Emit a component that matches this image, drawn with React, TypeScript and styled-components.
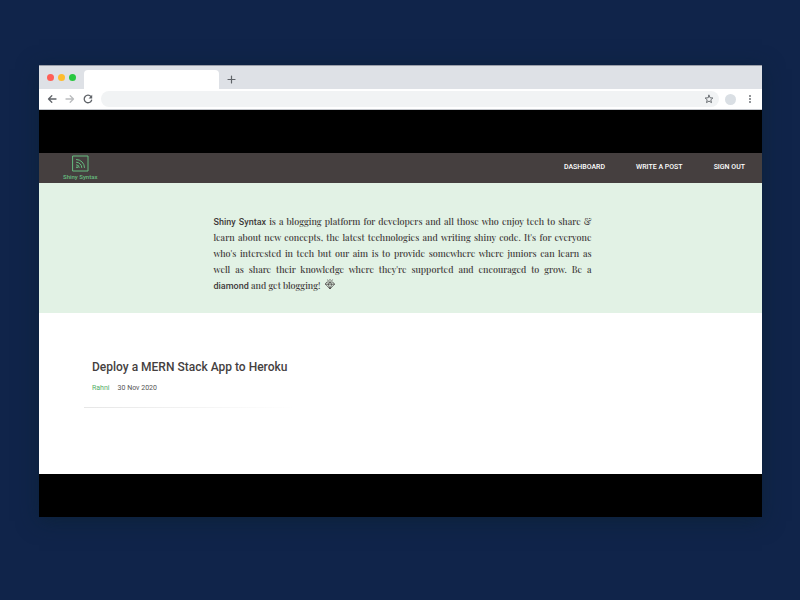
import React from 'react';
import styled, { createGlobalStyle } from 'styled-components';

const GlobalStyle = createGlobalStyle`
  *, *::before, *::after { box-sizing: border-box; }
  body {
    margin: 0;
    background: #10244a;
    font-family: Roboto, "Liberation Sans", sans-serif;
  }
`;

const Page = styled.div`
  min-height: 100vh;
  padding: 65px 38px 83px 39px;
`;

const BrowserWindow = styled.div`
  background: #000;
  box-shadow: 0 4px 20px rgba(10, 34, 46, 0.6);
`;

const TabStrip = styled.div`
  display: flex;
  align-items: flex-end;
  height: 24px;
  background: #dee1e6;
  border-top: 1px solid #9a9ea8;
`;

const TrafficLights = styled.div`
  display: flex;
  align-items: center;
  gap: 4px;
  width: 45px;
  height: 23px;
  padding-left: 8px;
`;

const Light = styled.span<{ $color: string }>`
  width: 7px;
  height: 7px;
  border-radius: 50%;
  background: ${({ $color }) => $color};
`;

const Tab = styled.div`
  width: 135px;
  height: 19px;
  background: #fff;
  border-radius: 4px 4px 0 0;
`;

const IconButton = styled.button<{ $color?: string }>`
  display: flex;
  padding: 0;
  border: 0;
  background: none;
  color: ${({ $color }) => $color ?? '#5f6368'};
`;

const NewTab = styled(IconButton)`
  margin: 0 0 5px 8px;
`;

const Toolbar = styled.div`
  display: flex;
  align-items: center;
  height: 21px;
  padding: 0 8px;
  background: #fff;
  border-bottom: 1px solid #c4c7cc;
`;

const NavButtons = styled.div`
  display: flex;
  gap: 8px;
  margin-right: 8px;
`;

const AddressBar = styled.div`
  display: flex;
  flex: 1;
  align-items: center;
  height: 16px;
  padding-right: 5px;
  background: #f1f3f4;
  border-radius: 8px;
`;

const AddressInput = styled.input`
  flex: 1;
  min-width: 0;
  height: 14px;
  padding: 0 8px;
  border: 0;
  outline: 0;
  background: transparent;
  font: 8px Roboto, sans-serif;
`;

const Avatar = styled.span`
  width: 11px;
  height: 11px;
  margin: 0 10px 0 6px;
  border-radius: 50%;
  background: #dadfe4;
`;

const Viewport = styled.div`
  padding: 43px 0;
`;

const SiteHeader = styled.header`
  display: flex;
  align-items: center;
  justify-content: space-between;
  height: 30px;
  padding: 0 17px 0 24px;
  background: #453f3f;
`;

const Logo = styled.a`
  display: flex;
  flex-direction: column;
  align-items: center;
  color: #66bd80;
  font: 500 6px/9px Roboto, sans-serif;
  text-decoration: none;
  white-space: nowrap;
`;

const SiteNav = styled.nav`
  display: flex;
  gap: 31px;
  padding-bottom: 2px;
`;

const NavLink = styled.a`
  color: #fff;
  font-size: 7px;
  font-weight: 500;
  line-height: 10px;
  text-decoration: none;
  text-transform: uppercase;
`;

const Hero = styled.section`
  padding: 30px 20px 20px 24px;
  background: #e2f2e5;
`;

const Intro = styled.p`
  max-width: 378px;
  margin: 0 auto;
  color: #3f3a3a;
  font: 500 9px/16px "Playfair Display", "Liberation Serif", serif;
  text-align: justify;

  strong {
    font: 500 9px/10px Roboto, sans-serif;
  }

  svg {
    margin-left: 2px;
    vertical-align: -1px;
  }
`;

const Phrase = styled.span`
  white-space: nowrap;
`;

const Posts = styled.main`
  min-height: 161px;
  padding: 45px;
  background: #fff;
`;

const Post = styled.article`
  width: 210px;
  padding: 0 0 14px 8px;
  border-bottom: 1px solid;
  border-image: linear-gradient(90deg, #e6e6e6, #fff) 1;
`;

const PostTitle = styled.h2`
  margin: 0 0 7px;
  color: #453f3f;
  font-size: 12px;
  font-weight: 500;
  line-height: 18px;
  white-space: nowrap;
`;

const PostMeta = styled.div`
  display: flex;
  gap: 8px;
  color: #555;
  font-size: 7px;
  line-height: 10px;
`;

const Author = styled.a`
  color: #54ad68;
  text-decoration: none;
`;

const Stroke = {
  fill: 'none',
  stroke: 'currentColor',
  strokeLinecap: 'round',
  strokeLinejoin: 'round',
} as const;

export default function App() {
  return (
    <>
      <GlobalStyle />
      <Page>
        <BrowserWindow>
          <TabStrip>
            <TrafficLights>
              <Light $color="#ff5f57" />
              <Light $color="#febc2e" />
              <Light $color="#28c840" />
            </TrafficLights>
            <Tab />
            <NewTab aria-label="New tab">
              <svg width="9" height="9" viewBox="0 0 9 9" {...Stroke} strokeWidth="1.2">
                <path d="M4.5 1v7M1 4.5h7" />
              </svg>
            </NewTab>
          </TabStrip>
          <Toolbar>
            <NavButtons>
              <IconButton aria-label="Back">
                <svg width="10" height="10" viewBox="0 0 10 10" {...Stroke} strokeWidth="1.3">
                  <path d="M9 5H1.5M4.8 1.8L1.5 5l3.3 3.2" />
                </svg>
              </IconButton>
              <IconButton aria-label="Forward" $color="#babcbe">
                <svg width="10" height="10" viewBox="0 0 10 10" {...Stroke} strokeWidth="1.3">
                  <path d="M1 5h7.5M5.2 1.8L8.5 5 5.2 8.2" />
                </svg>
              </IconButton>
              <IconButton aria-label="Reload">
                <svg width="10" height="10" viewBox="0 0 10 10" {...Stroke} strokeWidth="1.3">
                  <path d="M8.6 6.2A3.8 3.8 0 1 1 8 2.6" />
                  <path d="M9.2 0.8v3.6H5.6z" fill="currentColor" stroke="none" />
                </svg>
              </IconButton>
            </NavButtons>
            <AddressBar>
              <AddressInput type="text" aria-label="Address" />
              <IconButton aria-label="Bookmark">
                <svg width="10" height="10" viewBox="0 0 10 10" {...Stroke} strokeWidth="0.9">
                  <path d="M5 1.2l1.1 2.6 2.8.2-2.1 1.8.7 2.8L5 7.1 2.5 8.6l.7-2.8L1.1 4l2.8-.2z" />
                </svg>
              </IconButton>
            </AddressBar>
            <Avatar />
            <IconButton aria-label="Menu">
              <svg width="8" height="10" viewBox="0 0 8 10" fill="currentColor">
                <circle cx="4" cy="2" r="0.9" />
                <circle cx="4" cy="5" r="0.9" />
                <circle cx="4" cy="8" r="0.9" />
              </svg>
            </IconButton>
          </Toolbar>
          <Viewport>
            <SiteHeader>
              <Logo href="#">
                <svg width="17" height="17" viewBox="0 0 17 17" {...Stroke} strokeWidth="1">
                  <rect x="1" y="1" width="15" height="15" />
                  <path d="M4.5 4.5a8 8 0 0 1 8 8M4.5 7.2a5.3 5.3 0 0 1 5.3 5.3M4.5 9.8a2.7 2.7 0 0 1 2.7 2.7" />
                  <circle cx="4.9" cy="12.2" r="0.4" fill="currentColor" />
                </svg>
                Shiny Syntax
              </Logo>
              <SiteNav>
                <NavLink href="#">Dashboard</NavLink>
                <NavLink href="#">Write a post</NavLink>
                <NavLink href="#">Sign out</NavLink>
              </SiteNav>
            </SiteHeader>
            <Hero>
              <Intro>
                <strong>Shiny Syntax</strong> is a blogging platform for developers and all those
                who enjoy tech to share &amp; learn about new concepts, the latest technologies and
                writing shiny code. It's for everyone who's interested in tech but our aim is to
                provide somewhere where juniors can learn as <Phrase>well as share</Phrase> their
                knowledge where they're supported and encouraged to grow. Be a{' '}
                <Phrase>
                  <strong>diamond</strong> and get blogging!
                </Phrase>{' '}
                <svg width="10" height="11" viewBox="0 0 10 11" {...Stroke} strokeWidth="0.7">
                  <path d="M2.3 3h5.4L9.5 5.2 5 10 .5 5.2zM.5 5.2h9M3.3 5.2L5 10l1.7-4.8L5 3 3.3 5.2M5 .4v1M2.7.9l.5.8M7.3.9l-.5.8" />
                </svg>
              </Intro>
            </Hero>
            <Posts>
              <Post>
                <PostTitle>Deploy a MERN Stack App to Heroku</PostTitle>
                <PostMeta>
                  <Author href="#">Rahni</Author>
                  <time dateTime="2020-11-30">30 Nov 2020</time>
                </PostMeta>
              </Post>
            </Posts>
          </Viewport>
        </BrowserWindow>
      </Page>
    </>
  );
}
